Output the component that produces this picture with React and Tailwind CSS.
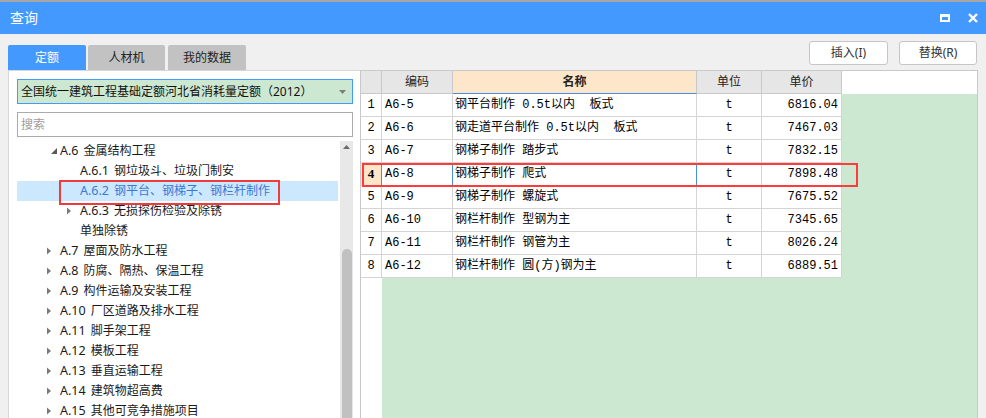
import React from "react";

const ui = { fontFamily: '"Noto Sans", "Noto Sans CJK SC", sans-serif' };
const mono = { fontFamily: '"Liberation Mono", "Noto Sans CJK SC", monospace' };

const tree = [
  { level: 1, code: "A.6", label: "金属结构工程", icon: "open" },
  { level: 2, code: "A.6.1", label: "钢垃圾斗、垃圾门制安", icon: null },
  { level: 2, code: "A.6.2", label: "钢平台、钢梯子、钢栏杆制作", icon: null, selected: true },
  { level: 2, code: "A.6.3", label: "无损探伤检验及除锈", icon: "closed" },
  { level: 2, code: "", label: "单独除锈", icon: null },
  { level: 1, code: "A.7", label: "屋面及防水工程", icon: "closed" },
  { level: 1, code: "A.8", label: "防腐、隔热、保温工程", icon: "closed" },
  { level: 1, code: "A.9", label: "构件运输及安装工程", icon: "closed" },
  { level: 1, code: "A.10", label: "厂区道路及排水工程", icon: "closed" },
  { level: 1, code: "A.11", label: "脚手架工程", icon: "closed" },
  { level: 1, code: "A.12", label: "模板工程", icon: "closed" },
  { level: 1, code: "A.13", label: "垂直运输工程", icon: "closed" },
  { level: 1, code: "A.14", label: "建筑物超高费", icon: "closed" },
  { level: 1, code: "A.15", label: "其他可竞争措施项目", icon: "closed" },
];

const rows = [
  ["A6-5", "钢平台制作 0.5t以内  板式", "t", "6816.04"],
  ["A6-6", "钢走道平台制作 0.5t以内  板式", "t", "7467.03"],
  ["A6-7", "钢梯子制作 踏步式", "t", "7832.15"],
  ["A6-8", "钢梯子制作 爬式", "t", "7898.48"],
  ["A6-9", "钢梯子制作 螺旋式", "t", "7675.52"],
  ["A6-10", "钢栏杆制作 型钢为主", "t", "7345.65"],
  ["A6-11", "钢栏杆制作 钢管为主", "t", "8026.24"],
  ["A6-12", "钢栏杆制作 圆(方)钢为主", "t", "6889.51"],
];

function TreeIcon({ type }) {
  if (type === "open")
    return (
      <svg width="16" height="20" viewBox="0 0 16 20" className="shrink-0">
        <polygon points="7,13 13,13 13,7" fill="#595959" />
      </svg>
    );
  if (type === "closed")
    return (
      <svg width="16" height="20" viewBox="0 0 16 20" className="shrink-0">
        <polygon points="3,6.5 7,10 3,13.5" fill="#7a7a7a" />
      </svg>
    );
  return <span className="w-[16px] shrink-0" />;
}

export default function App() {
  return (
    <div
      className="relative w-[986px] h-[418px] overflow-hidden bg-[#f0f0f0] border-t-2 border-[#a6a6a6] flex flex-col"
      style={ui}
    >
      {/* title bar */}
      <div className="h-[32px] bg-[#4499ff] flex items-center justify-between pl-[10px] pr-[8px] shrink-0">
        <span className="text-white text-[14px] leading-none">查询</span>
        <div className="flex items-center gap-[18px]">
          <span className="w-[10px] h-[8px] border-white border-[2px] border-t-[3px] block" />
          <svg width="10" height="10" viewBox="0 0 10 10">
            <path d="M1 1 L9 9 M9 1 L1 9" stroke="white" strokeWidth="2.4" />
          </svg>
        </div>
      </div>

      {/* tabs + buttons */}
      <div className="h-[36px] flex items-end justify-between pl-[8px] pr-[9px] shrink-0">
        <div className="flex gap-[2px] items-end">
          <div className="w-[78px] h-[25px] bg-[#4499ff] text-white text-[12px] flex items-center justify-center rounded-t-[2px]">
            定额
          </div>
          <div className="w-[77px] h-[25px] bg-[#c2c2c2] text-[#222] text-[12px] flex items-center justify-center rounded-t-[2px]">
            人材机
          </div>
          <div className="w-[78px] h-[25px] bg-[#c2c2c2] text-[#222] text-[12px] flex items-center justify-center rounded-t-[2px] ml-[1px]">
            我的数据
          </div>
        </div>
        <div className="flex gap-[11px] mb-[5px]">
          <div className="w-[79px] h-[24px] bg-white border border-[#c6c6c6] rounded-[3px] text-[12px] text-[#333] flex items-center justify-center">
            插入(I)
          </div>
          <div className="w-[78px] h-[24px] bg-white border border-[#c6c6c6] rounded-[3px] text-[12px] text-[#333] flex items-center justify-center">
            替换(R)
          </div>
        </div>
      </div>

      {/* content */}
      <div className="flex-1 flex pl-[8px] min-h-0">
        {/* left panel */}
        <div className="w-[352px] bg-white border-l border-t border-[#d6d6d6] pl-[8px] pr-[7px] pt-[8px] flex flex-col min-h-0">
          <div className="h-[25px] bg-[#cde8d0] border border-[#4499ff] flex items-center justify-between pl-[3px] pr-[6px] shrink-0">
            <span className="text-[12px] text-[#111] whitespace-nowrap">全国统一建筑工程基础定额河北省消耗量定额（2012）</span>
            <svg width="7" height="4" viewBox="0 0 7 4">
              <polygon points="0,0 7,0 3.5,4" fill="#7d7d7d" />
            </svg>
          </div>
          <div className="h-[25px] mt-[8px] border border-[#ababab] flex items-center pl-[3px] shrink-0">
            <span className="text-[12px] text-[#9d9d9d]">搜索</span>
          </div>
          <div className="flex-1 flex mt-[4px] min-h-0">
            <div className="w-[321px] mr-[2px] flex flex-col">
              {tree.map((t, i) => (
                <div
                  key={i}
                  className={
                    "h-[20px] shrink-0 flex items-center whitespace-nowrap text-[12px] " +
                    (t.selected ? "bg-[#cce8ff] text-[#3a78d4]" : "text-[#1a1a1a]")
                  }
                  style={{ paddingLeft: t.level === 1 ? 27 : 47 }}
                >
                  <TreeIcon type={t.icon} />
                  {t.code ? <span className="text-[12.5px] mr-[5px]">{t.code}</span> : null}
                  <span>{t.label}</span>
                </div>
              ))}
            </div>
            <div className="w-[13px] bg-[#e8e8e8] flex flex-col items-center">
              <svg width="9" height="10" viewBox="0 0 9 10" className="mt-[1px] shrink-0">
                <polygon points="1,7 8,7 4.5,3" fill="#6b6b6b" />
              </svg>
              <div className="mt-[97px] w-[10px] flex-1 bg-[#c1c1c1] rounded-t-full" />
            </div>
          </div>
        </div>

        {/* grid panel */}
        <div className="w-[618px] border border-b-0 border-[#c9c9c9] flex flex-col min-h-0 bg-white" style={mono}>
          {/* header */}
          <div className="h-[23px] flex shrink-0 text-[12px]" style={ui}>
            <div className="w-[21px] bg-[#e6e6e6] border-r border-b border-[#c9c9c9]" />
            <div className="w-[71px] bg-[#e6e6e6] border-r border-b border-[#c9c9c9] flex items-center justify-center text-[#222]">编码</div>
            <div className="w-[244px] bg-[#fde6c9] border-r border-b border-b-[#4a90e2] border-r-[#c9c9c9] flex items-center justify-center font-bold text-[#222]">名称</div>
            <div className="w-[65px] bg-[#e6e6e6] border-r border-b border-[#c9c9c9] flex items-center justify-center text-[#222]">单位</div>
            <div className="w-[80px] bg-[#e6e6e6] border-r border-b border-[#c9c9c9] flex items-center justify-center text-[#222]">单价</div>
            <div className="flex-1 bg-white" />
          </div>
          {/* rows */}
          {rows.map((r, i) => {
            const sel = i === 3;
            return (
              <div key={i} className="h-[23px] flex shrink-0 text-[12px] text-black">
                <div
                  className={
                    "w-[21px] border-b flex items-center justify-center border-r " +
                    (sel
                      ? "bg-[#fde6c9] border-b-[#d4d4d4] border-r-[#4a90e2] font-bold"
                      : "bg-white border-[#d4d4d4]")
                  }
                  style={sel ? { fontFamily: '"Liberation Serif", serif', fontSize: 13 } : undefined}
                >
                  {i + 1}
                </div>
                <div
                  className={
                    "w-[71px] border-b border-r flex items-center pl-[3px] whitespace-nowrap " +
                    (sel ? "border-b-[#d4d4d4] border-r-[#4a90e2]" : "border-[#d4d4d4]")
                  }
                >
                  {r[0]}
                </div>
                <div
                  className={
                    "w-[244px] border-b border-r flex items-center pl-[2px] whitespace-pre " +
                    (sel ? "border-b-[#d4d4d4] border-r-[#4a90e2]" : "border-[#d4d4d4]")
                  }
                >
                  {r[1]}
                </div>
                <div className="w-[65px] border-b border-r border-[#d4d4d4] flex items-center justify-center">{r[2]}</div>
                <div className="w-[80px] border-b border-r border-[#d4d4d4] flex items-center justify-end pr-[3px]">{r[3]}</div>
                <div className="flex-1 bg-[#cde8d0]" />
              </div>
            );
          })}
          <div className="flex-1 flex">
            <div className="w-[21px] bg-white" />
            <div className="flex-1 bg-[#cde8d0]" />
          </div>
        </div>
      </div>

      {/* red annotation boxes */}
      <div className="absolute left-[59px] top-[178px] w-[221px] h-[25px] border-2 border-[#ef3b3b] pointer-events-none" />
      <div className="absolute left-[362px] top-[161px] w-[496px] h-[24px] border-2 border-[#ff3b3b] pointer-events-none" />
    </div>
  );
}
